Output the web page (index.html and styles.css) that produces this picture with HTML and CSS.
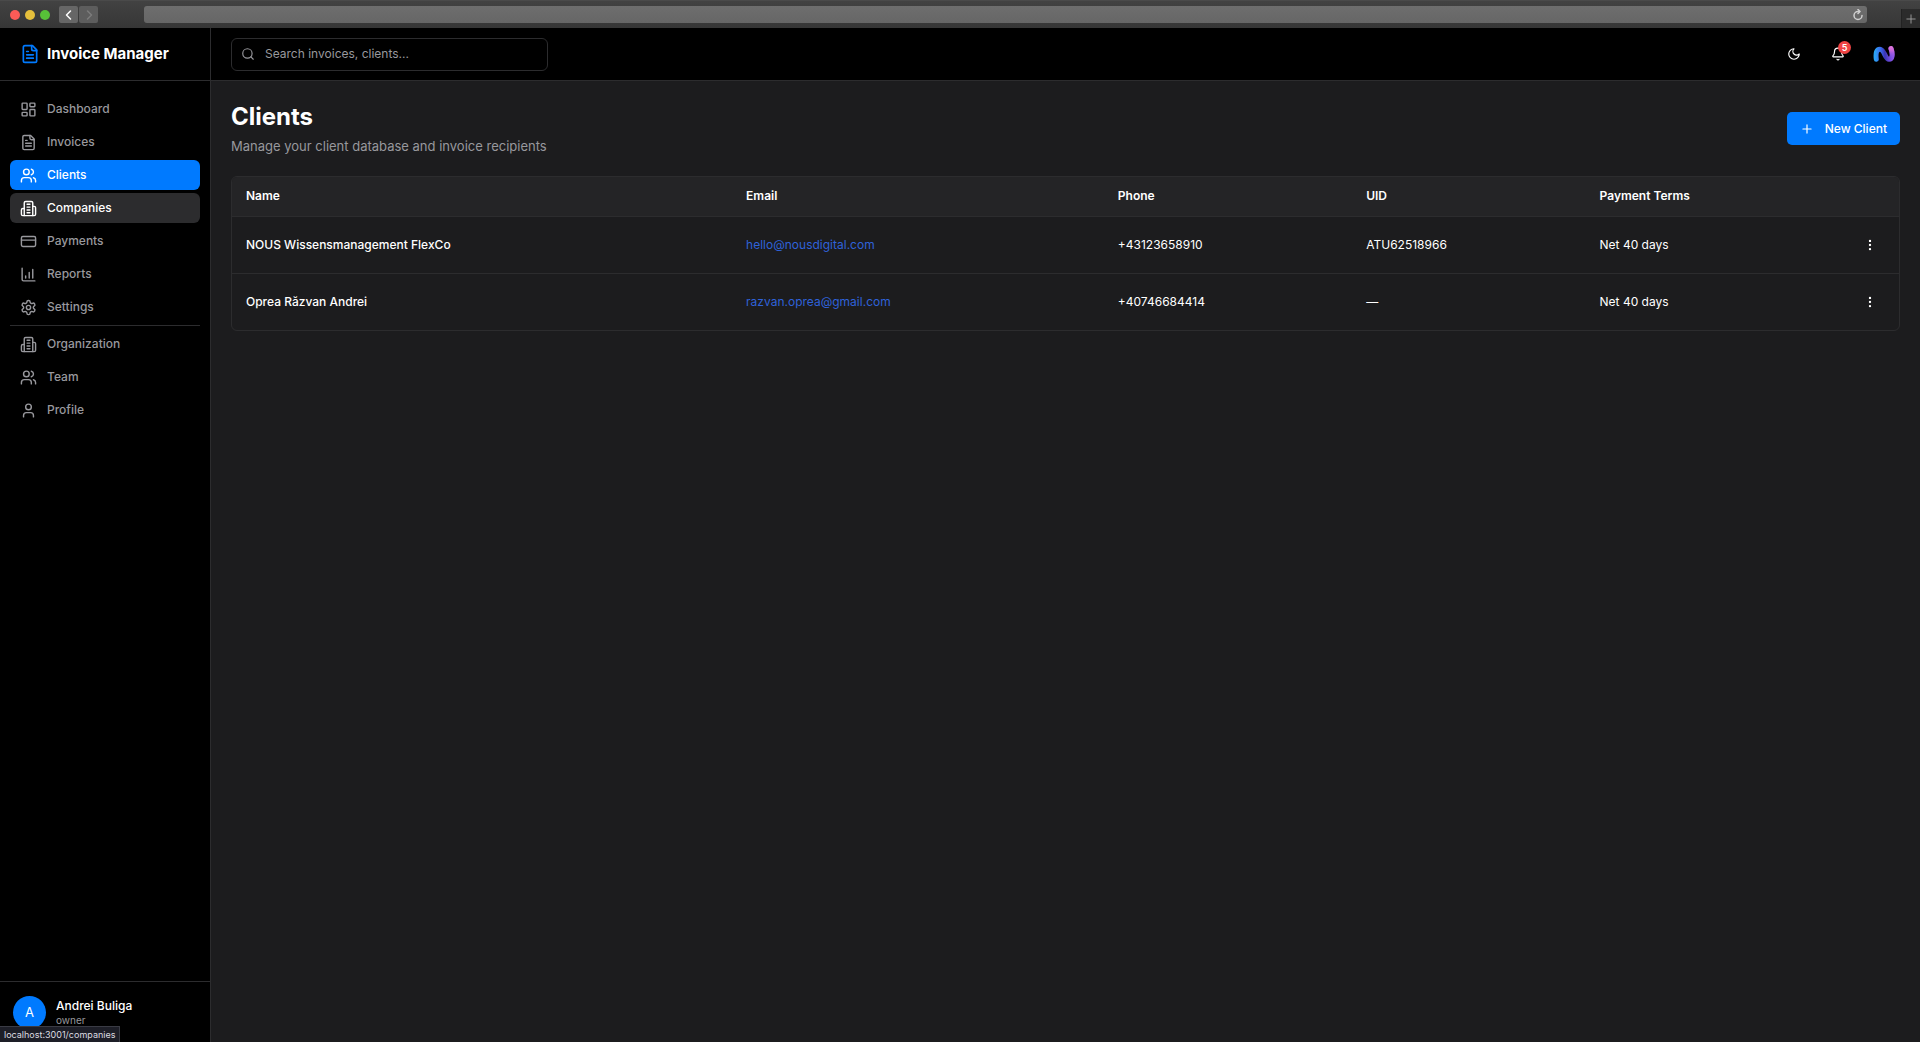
FILE: index.html
```
<!DOCTYPE html>
<html lang="en">

<head>
  <meta charset="utf-8">
  <title>Clients - Invoice Manager</title>
  <link rel="stylesheet" href="styles.css">
</head>

<body>
  <!-- icon shapes shared by several places -->
  <svg class="sprite" aria-hidden="true">
    <symbol id="icon-file" viewBox="0 0 24 24">
      <path d="M15 2H6a2 2 0 0 0-2 2v16a2 2 0 0 0 2 2h12a2 2 0 0 0 2-2V7Z"/>
      <path d="M14 2v4a2 2 0 0 0 2 2h4"/>
      <path d="M10 9H8M16 13H8M16 17H8"/>
    </symbol>
    <symbol id="icon-users" viewBox="0 0 24 24">
      <path d="M16 21v-2a4 4 0 0 0-4-4H6a4 4 0 0 0-4 4v2"/>
      <circle cx="9" cy="7" r="4"/>
      <path d="M22 21v-2a4 4 0 0 0-3-3.87M16 3.13a4 4 0 0 1 0 7.75"/>
    </symbol>
    <symbol id="icon-building" viewBox="0 0 24 24">
      <path d="M6 22V4a2 2 0 0 1 2-2h8a2 2 0 0 1 2 2v18Z"/>
      <path d="M6 12H4a2 2 0 0 0-2 2v6a2 2 0 0 0 2 2h2M18 9h2a2 2 0 0 1 2 2v9a2 2 0 0 1-2 2h-2"/>
      <path d="M10 6h4M10 10h4M10 14h4M10 18h4"/>
    </symbol>
    <symbol id="icon-dots" viewBox="0 0 24 24">
      <circle cx="12" cy="12" r="1"/>
      <circle cx="12" cy="5" r="1"/>
      <circle cx="12" cy="19" r="1"/>
    </symbol>
  </svg>

  <div class="browser-bar">
    <div class="lights">
      <span class="light red"></span>
      <span class="light yellow"></span>
      <span class="light green"></span>
    </div>
    <div class="history">
      <button type="button" aria-label="Back"><svg class="icon" viewBox="0 0 24 24"><path d="m15 4-8 8 8 8"/></svg></button>
      <button type="button" aria-label="Forward" disabled><svg class="icon" viewBox="0 0 24 24"><path d="m9 4 8 8-8 8"/></svg></button>
    </div>
    <div class="address">
      <input type="text" aria-label="Address">
      <button type="button" aria-label="Reload"><svg class="icon" viewBox="0 0 24 24"><path d="M20 13a8 8 0 1 1-8-8h3"/><path d="m12 1 4 4-4 4"/></svg></button>
    </div>
    <button type="button" class="new-tab" aria-label="New tab"><svg class="icon" viewBox="0 0 24 24"><path d="M2 12h20M12 2v20"/></svg></button>
  </div>

  <div class="app">
    <aside class="sidebar">
      <div class="brand">
        <svg class="icon"><use href="#icon-file"/></svg>
        <span>Invoice Manager</span>
      </div>

      <nav class="nav">
        <a href="#dashboard">
          <svg class="icon" viewBox="0 0 24 24"><rect x="3" y="3" width="7" height="9" rx="1"/><rect x="14" y="3" width="7" height="5" rx="1"/><rect x="14" y="12" width="7" height="9" rx="1"/><rect x="3" y="16" width="7" height="5" rx="1"/></svg>
          Dashboard
        </a>
        <a href="#invoices"><svg class="icon"><use href="#icon-file"/></svg>Invoices</a>
        <a href="#clients" class="active"><svg class="icon"><use href="#icon-users"/></svg>Clients</a>
        <a href="#companies" class="hovered"><svg class="icon"><use href="#icon-building"/></svg>Companies</a>
        <a href="#payments">
          <svg class="icon" viewBox="0 0 24 24"><rect x="2" y="5" width="20" height="14" rx="2"/><path d="M2 10h20"/></svg>
          Payments
        </a>
        <a href="#reports">
          <svg class="icon" viewBox="0 0 24 24"><path d="M3 3v16a2 2 0 0 0 2 2h16M8 17v-3M13 17V9M18 17V5"/></svg>
          Reports
        </a>
        <a href="#settings">
          <svg class="icon" viewBox="0 0 24 24"><path d="M12.22 2h-.44a2 2 0 0 0-2 2v.18a2 2 0 0 1-1 1.73l-.43.25a2 2 0 0 1-2 0l-.15-.08a2 2 0 0 0-2.73.73l-.22.38a2 2 0 0 0 .73 2.73l.15.1a2 2 0 0 1 1 1.72v.51a2 2 0 0 1-1 1.74l-.15.09a2 2 0 0 0-.73 2.73l.22.38a2 2 0 0 0 2.73.73l.15-.08a2 2 0 0 1 2 0l.43.25a2 2 0 0 1 1 1.73V20a2 2 0 0 0 2 2h.44a2 2 0 0 0 2-2v-.18a2 2 0 0 1 1-1.73l.43-.25a2 2 0 0 1 2 0l.15.08a2 2 0 0 0 2.73-.73l.22-.39a2 2 0 0 0-.73-2.73l-.15-.08a2 2 0 0 1-1-1.74v-.5a2 2 0 0 1 1-1.74l.15-.09a2 2 0 0 0 .73-2.73l-.22-.38a2 2 0 0 0-2.73-.73l-.15.08a2 2 0 0 1-2 0l-.43-.25a2 2 0 0 1-1-1.73V4a2 2 0 0 0-2-2z"/><circle cx="12" cy="12" r="3"/></svg>
          Settings
        </a>
        <hr>
        <a href="#organization"><svg class="icon"><use href="#icon-building"/></svg>Organization</a>
        <a href="#team"><svg class="icon"><use href="#icon-users"/></svg>Team</a>
        <a href="#profile">
          <svg class="icon" viewBox="0 0 24 24"><path d="M19 21v-2a4 4 0 0 0-4-4H9a4 4 0 0 0-4 4v2"/><circle cx="12" cy="7" r="4"/></svg>
          Profile
        </a>
      </nav>

      <div class="account">
        <span class="avatar">A</span>
        <div>
          <div class="account-name">Andrei Buliga</div>
          <div class="account-role">owner</div>
        </div>
      </div>
    </aside>

    <div class="content">
      <header class="topbar">
        <label class="search">
          <svg class="icon" viewBox="0 0 24 24"><circle cx="11" cy="11" r="8"/><path d="m21 21-4-4"/></svg>
          <input type="text" placeholder="Search invoices, clients..." aria-label="Search">
        </label>
        <div class="tools">
          <button type="button" aria-label="Toggle theme"><svg class="icon" viewBox="0 0 24 24"><path d="M12 3a6 6 0 0 0 9 9 9 9 0 1 1-9-9Z"/></svg></button>
          <button type="button" aria-label="Notifications">
            <svg class="icon" viewBox="0 0 24 24"><path d="M10.27 21a2 2 0 0 0 3.46 0M3.26 15.33A1 1 0 0 0 4 17h16a1 1 0 0 0 .74-1.67C19.41 13.96 18 12.5 18 8A6 6 0 0 0 6 8c0 4.5-1.41 5.96-2.74 7.33"/></svg>
            <span class="badge">5</span>
          </button>
          <button type="button" class="org" aria-label="Organization menu">
            <svg viewBox="0 0 22 18">
              <defs>
                <linearGradient id="wave" gradientUnits="userSpaceOnUse" x1="2" y1="9" x2="20" y2="9">
                  <stop offset="0" stop-color="#2ba4f5"/>
                  <stop offset=".3" stop-color="#3b6cf0"/>
                  <stop offset=".55" stop-color="#3a35b5"/>
                  <stop offset=".8" stop-color="#6a48d8"/>
                  <stop offset="1" stop-color="#8a55e6"/>
                </linearGradient>
                <linearGradient id="tip" gradientUnits="userSpaceOnUse" x1="18" y1="1" x2="18" y2="13">
                  <stop offset="0" stop-color="#e879d6"/>
                  <stop offset=".4" stop-color="#c565dc"/>
                  <stop offset="1" stop-color="#8a55e6" stop-opacity="0"/>
                </linearGradient>
              </defs>
              <g fill="none" stroke-width="5" stroke-linecap="round">
                <path d="M3.300 14.300C2.500 8 3.500 4.200 7 4.200c4.500 0 4.800 10 9 10 3.500 0 4-5 2-10.500" stroke="url(#wave)"/>
                <path d="M16 14.200c3.500 0 4-5 2-10.500" stroke="url(#tip)"/>
              </g>
            </svg>
          </button>
        </div>
      </header>

      <main>
        <div class="page-head">
          <div>
            <h1>Clients</h1>
            <p>Manage your client database and invoice recipients</p>
          </div>
          <button type="button" class="primary">
            <svg class="icon" viewBox="0 0 24 24"><path d="M5 12h14M12 5v14"/></svg>
            New Client
          </button>
        </div>

        <div class="table-card">
          <table>
            <colgroup>
              <col class="col-name">
              <col class="col-email">
              <col class="col-phone">
              <col class="col-uid">
              <col>
              <col class="col-actions">
            </colgroup>
            <thead>
              <tr>
                <th>Name</th>
                <th>Email</th>
                <th>Phone</th>
                <th>UID</th>
                <th>Payment Terms</th>
                <th></th>
              </tr>
            </thead>
            <tbody>
              <tr>
                <td class="client">NOUS Wissensmanagement FlexCo</td>
                <td><a href="mailto:hello@nousdigital.com">hello@nousdigital.com</a></td>
                <td>+43123658910</td>
                <td>ATU62518966</td>
                <td>Net 40 days</td>
                <td class="actions"><button type="button" aria-label="Actions"><svg class="icon"><use href="#icon-dots"/></svg></button></td>
              </tr>
              <tr>
                <td class="client">Oprea Răzvan Andrei</td>
                <td><a href="mailto:razvan.oprea@gmail.com">razvan.oprea@gmail.com</a></td>
                <td>+40746684414</td>
                <td>—</td>
                <td>Net 40 days</td>
                <td class="actions"><button type="button" aria-label="Actions"><svg class="icon"><use href="#icon-dots"/></svg></button></td>
              </tr>
            </tbody>
          </table>
        </div>
      </main>
    </div>
  </div>

  <div class="status-bubble">localhost:3001/companies</div>
</body>

</html>
```
FILE: styles.css
```
* {
  box-sizing: border-box;
}

body {
  margin: 0;
  min-height: 100vh;
  display: flex;
  flex-direction: column;
  background-color: #1c1c1e;
  color: #fff;
  font-family: Inter, sans-serif;
  font-size: 12px;
  line-height: 16px;
}

button {
  display: flex;
  align-items: center;
  justify-content: center;
  padding: 0;
  border: none;
  background: none;
  color: inherit;
  font: inherit;
  cursor: pointer;
}

.sprite {
  position: absolute;
  width: 0;
  height: 0;
}

.icon {
  width: 14px;
  height: 14px;
  flex-shrink: 0;
  fill: none;
  stroke: currentColor;
  stroke-width: 2;
  stroke-linecap: round;
  stroke-linejoin: round;
}

/* browser window bar */
.browser-bar {
  height: 28px;
  display: flex;
  align-items: center;
  padding-left: 10px;
  background: linear-gradient(#424242, #363636);
  border-top: 1px solid #4a4a4a;
}

.lights {
  display: flex;
  gap: 5px;
}

.light {
  width: 10px;
  height: 10px;
  border-radius: 50%;
}

.red {
  background-color: #fc5b57;
}

.yellow {
  background-color: #e5bf3c;
}

.green {
  background-color: #57c038;
}

.history {
  display: flex;
  gap: 1px;
  margin-left: 9px;
}

.history button {
  width: 19px;
  height: 17px;
  border-radius: 2px;
  background-color: #666;
}

.history button:disabled {
  background-color: #5d5d5d;
  color: #7c7c7c;
}

.history .icon {
  width: 12px;
  height: 12px;
  stroke-width: 3;
}

.address {
  flex: 1;
  height: 17px;
  display: flex;
  align-items: center;
  margin: 0 34px 0 46px;
  padding-right: 3px;
  border-radius: 3px;
  background: linear-gradient(#6e6e6e, #666);
}

.address input {
  flex: 1;
  border: none;
  outline: none;
  background: none;
  color: #fff;
}

.address .icon {
  width: 12px;
  height: 12px;
  color: #d0d0d0;
  stroke-width: 3;
}

.new-tab {
  align-self: flex-end;
  width: 19px;
  height: 19px;
  background-color: #2b2b2b;
  border-left: 1px solid #222;
  color: #aaa;
}

.new-tab .icon {
  width: 10px;
  height: 10px;
}

/* layout */
.app {
  flex: 1;
  display: flex;
}

.sidebar {
  width: 211px;
  flex-shrink: 0;
  display: flex;
  flex-direction: column;
  background-color: #000;
  border-right: 1px solid #2c2c2e;
}

.brand {
  height: 53px;
  display: flex;
  align-items: center;
  gap: 7px;
  padding-left: 20px;
  border-bottom: 1px solid #2c2c2e;
  font-size: 15px;
  font-weight: 700;
}

.brand .icon {
  width: 20px;
  height: 20px;
  color: #007aff;
}

.nav {
  flex: 1;
  display: flex;
  flex-direction: column;
  gap: 3px;
  padding: 13px 10px;
}

.nav a {
  height: 30px;
  display: flex;
  align-items: center;
  gap: 10px;
  padding: 0 10px;
  border-radius: 6px;
  color: #98989d;
  font-weight: 500;
  text-decoration: none;
}

.nav .icon {
  width: 17px;
  height: 17px;
}

.nav a.active {
  background-color: #007aff;
  color: #fff;
}

.nav a.hovered {
  background-color: #2c2c2e;
  color: #fff;
}

.nav hr {
  width: 100%;
  margin: 0;
  border: none;
  border-top: 1px solid #2c2c2e;
}

.account {
  height: 61px;
  display: flex;
  align-items: center;
  gap: 10px;
  padding-left: 13px;
  border-top: 1px solid #2c2c2e;
}

.avatar {
  width: 33px;
  height: 33px;
  display: flex;
  align-items: center;
  justify-content: center;
  border-radius: 50%;
  background-color: #007aff;
  font-size: 13px;
}

.account-name {
  font-weight: 500;
}

.account-role {
  color: #98989d;
  font-size: 10px;
  line-height: 13px;
}

.content {
  flex: 1;
  min-width: 0;
}

.topbar {
  height: 53px;
  display: flex;
  align-items: center;
  justify-content: space-between;
  padding: 0 20px;
  background-color: #000;
  border-bottom: 1px solid #2c2c2e;
}

.search {
  width: 317px;
  height: 33px;
  display: flex;
  align-items: center;
  gap: 10px;
  padding: 0 9px;
  border: 1px solid #2c2c2e;
  border-radius: 6px;
  color: #98989d;
}

.search input {
  flex: 1;
  padding: 0;
  border: none;
  outline: none;
  background: none;
  color: #fff;
  font: inherit;
}

.search input::placeholder {
  color: #98989d;
  opacity: 1;
}

.tools {
  display: flex;
  gap: 11px;
}

.tools button {
  position: relative;
  width: 33px;
  height: 33px;
}

.tools .org {
  margin-left: 2px;
}

.org svg {
  width: 22px;
  height: 18px;
}

.badge {
  position: absolute;
  top: 3px;
  right: 3px;
  width: 13px;
  height: 13px;
  border-radius: 50%;
  background-color: #ef4444;
  font-size: 9px;
  font-weight: 600;
  line-height: 13px;
}

main {
  padding: 20px;
}

.page-head {
  display: flex;
  align-items: center;
  justify-content: space-between;
  margin-bottom: 20px;
}

h1 {
  margin: 0 0 4px;
  font-size: 24px;
  font-weight: 700;
  line-height: 31px;
}

.page-head p {
  margin: 0;
  color: #98989d;
  font-size: 13px;
  line-height: 20px;
}

.primary {
  height: 33px;
  gap: 11px;
  padding: 0 13px;
  border-radius: 5px;
  background-color: #007aff;
  font-weight: 500;
}

/* clients table */
.table-card {
  border: 1px solid #2c2c2e;
  border-radius: 6px;
  overflow: hidden;
}

table {
  width: 100%;
  table-layout: fixed;
  border-collapse: collapse;
}

.col-name {
  width: 30%;
}

.col-email {
  width: 22.3%;
}

.col-phone {
  width: 14.9%;
}

.col-uid {
  width: 14%;
}

.col-actions {
  width: 60px;
}

th,
td {
  padding: 0 14px;
  text-align: left;
}

th {
  height: 39px;
  background-color: #242426;
  font-weight: 600;
}

td {
  height: 57px;
  border-top: 1px solid #2c2c2e;
}

td a {
  color: #2f62d9;
  text-decoration: none;
}

.client {
  font-weight: 500;
}

.actions button {
  width: 33px;
  height: 33px;
}

/* link preview over the window corner */
.status-bubble {
  position: fixed;
  left: 0;
  bottom: 0;
  padding: 0 4px;
  border: 1px solid #3a3b44;
  border-left: none;
  border-bottom: none;
  background-color: #1d1e27;
  color: #dcdce0;
  font-size: 9px;
  line-height: 15px;
}
```
